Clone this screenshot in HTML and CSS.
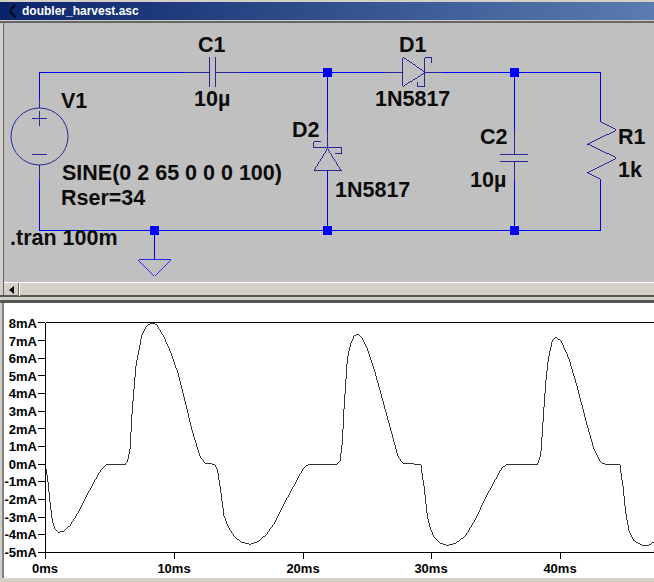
FILE: index.html
```html
<!DOCTYPE html>
<html lang="en">
<head>
  <meta charset="UTF-8">
  <meta name="viewport" content="width=device-width, initial-scale=1.0">
  <title>doubler_harvest.asc</title>
  <link rel="stylesheet" href="styles.css">
</head>
<body>
  <div class="titlebar">
    <svg class="title-icon" width="12" height="18" viewBox="0 0 12 18">
      <path d="M9.5 2.5 L6 6 L4.5 8.5 L4.5 11.5 L6 11.5 L9.5 15.5" fill="none" stroke="#000" stroke-width="1.4"/>
    </svg>
    <span class="title-text">doubler_harvest.asc</span>
  </div>

  <div class="schematic-window">
    <svg class="schematic" width="650" height="259" viewBox="4 23 650 259">
      <!-- wires -->
      <g class="wire">
        <path d="M39.5 100V72.5H183M241 72.5H385M442 72.5H600.5V122"/>
        <path d="M600.5 180V230.5H39.5V180"/>
        <path d="M327.5 72.5V130M327.5 170V230.5"/>
        <path d="M514.5 72.5V130M514.5 180V230.5"/>
        <path d="M154.5 230.5V259.5"/>
      </g>
      <path class="ground" d="M138.5 259.5H170.5L154.5 275.5Z"/>
      <g class="junction">
        <rect x="323" y="68" width="9" height="9"/>
        <rect x="510" y="68" width="9" height="9"/>
        <rect x="150" y="226" width="9" height="9"/>
        <rect x="323" y="226" width="9" height="9"/>
        <rect x="510" y="226" width="9" height="9"/>
      </g>
      <!-- components -->
      <g class="symbol">
        <circle cx="39.5" cy="136.5" r="28.5"/>
        <path d="M39.5 100V108M39.5 165V180M32 118.5H47M39.5 111V126M32 154.5H47"/>
        <path d="M183 72.5H209.5M209.5 57V87M215.5 57V87M215.5 72.5H241"/>
        <path d="M385 72.5H402.5M402.5 57.5V86L424.5 72.5ZM424.5 72.5H442"/>
        <path d="M431.5 62.5V57.5H424.5V86.5H417.5V81.5"/>
        <path d="M327.5 130V147.5M313.5 170.5H341.5L327.5 147.5Z"/>
        <path d="M320.5 141.5H313.5V147.5H341.5V153.5H334.5"/>
        <path d="M514.5 130V154.5M500 154.5H528M500 161.5H528M514.5 161.5V180"/>
        <path d="M600.5 122L616 130L586.5 144L616 158L586.5 172.5L600.5 180"/>
      </g>
      <g class="label">
        <text x="198" y="52">C1</text>
        <text x="194" y="106">10µ</text>
        <text x="61" y="108">V1</text>
        <text x="292" y="137">D2</text>
        <text x="399" y="52">D1</text>
        <text x="375" y="106">1N5817</text>
        <text x="480" y="144">C2</text>
        <text x="618" y="144">R1</text>
        <text x="618" y="177">1k</text>
        <text x="470" y="187">10µ</text>
        <text x="335" y="197">1N5817</text>
        <text x="62" y="180">SINE(0 2 65 0 0 0 100)</text>
        <text x="61" y="205">Rser=34</text>
        <text x="10" y="245">.tran 100m</text>
      </g>
    </svg>
    <div class="hscroll">
      <div class="scroll-btn"><span class="arrow-left"></span></div>
      <div class="scroll-track"></div>
    </div>
  </div>

  <div class="plot-window">
    <svg class="plot" width="650" height="275" viewBox="4 304 650 275">
      <path class="axis" d="M45.5 323.5H654M45.5 323.5V553.5M45.5 553.5H654"/>
      <path class="axis" d="M38 323.5H45M38 341.5H45M38 359.5H45M38 376.5H45M38 394.5H45M38 412.5H45M38 429.5H45M38 447.5H45M38 465.5H45M38 482.5H45M38 500.5H45M38 518.5H45M38 535.5H45M38 553.5H45"/>
      <path class="axis" d="M45.5 553V560M174.5 553V560M303.5 553V560M431.5 553V560M560.5 553V560"/>
      <g class="ylabel">
        <text x="37" y="329">8mA</text>
        <text x="37" y="347">7mA</text>
        <text x="37" y="364">6mA</text>
        <text x="37" y="382">5mA</text>
        <text x="37" y="399">4mA</text>
        <text x="37" y="417">3mA</text>
        <text x="37" y="435">2mA</text>
        <text x="37" y="452">1mA</text>
        <text x="37" y="470">0mA</text>
        <text x="37" y="487">-1mA</text>
        <text x="37" y="505">-2mA</text>
        <text x="37" y="523">-3mA</text>
        <text x="37" y="540">-4mA</text>
        <text x="37" y="558">-5mA</text>
      </g>
      <g class="xlabel">
        <text x="45" y="574">0ms</text>
        <text x="174" y="574">10ms</text>
        <text x="303" y="574">20ms</text>
        <text x="431" y="574">30ms</text>
        <text x="560" y="574">40ms</text>
      </g>
      <polyline class="trace" points="45.5,465.5 47.7,480 50,503 52.3,521.7 55,530 58.3,533.3 63.3,532.3 70,526.7 78.3,513.3 86.7,496.7 96.7,478.3 101.7,470 106.7,465.5 125,465.5 127.7,461.7 130,450 132.3,410 136,366.7 141.7,336.7 146.7,326.7 151.7,324 156.7,325.7 163.3,336.7 170,351.7 178.3,375 185,401.7 191.7,430 196.7,446.7 200,457.3 205,464 215,465.5 217.3,470 220,486.7 224,516.7 228.3,528.3 235,538.3 241.7,543.3 250,545.3 258.3,542.7 266.7,535 275,523.3 286.7,500 296.7,481.7 303.3,469.3 308.3,465.5 336.7,465.5 340,461.7 342.3,443.3 344,410 347.3,360 350.7,345 354.3,336.7 357.7,335.3 361.7,338.3 366.7,348.3 375,373.3 383.3,403.3 393.3,440 398.3,458.3 403.3,464.3 421,465.5 424,486.7 427.3,516.7 430,528.3 434,538.3 440.7,544.3 447.3,546.3 455.7,544.3 465.7,536.7 475.7,520 484,501.7 494,483.3 502.3,468.3 507.3,465.5 537.3,465.5 540.7,456.7 543,423.3 545.7,383.3 548.3,360 552.3,341.7 556.3,338.3 561.3,342.3 569,360 577.3,388.3 587.3,426.7 594,450 600.7,463.3 605.7,465.5 620,465.5 623,486.7 625.7,513.3 629,531.7 634,541.7 642.3,546.3 649,546 654,542.7"/>
    </svg>
  </div>
</body>
</html>
```

FILE: styles.css
```css
* {
  margin: 0;
  padding: 0;
  box-sizing: border-box;
}

body {
  width: 654px;
  height: 582px;
  overflow: hidden;
  background-color: #d4d0c8;
  font-family: "Liberation Sans", Arial, sans-serif;
  padding-top: 2px;
}

svg {
  display: block;
}

.titlebar {
  height: 18px;
  display: flex;
  align-items: center;
  padding-left: 6px;
  background: linear-gradient(to right, #0a246a, #5a7cb0);
}

.title-icon {
  margin-right: 4px;
}

.title-text {
  color: white;
  font-size: 12px;
  font-weight: bold;
}

.schematic-window {
  position: relative;
  margin-top: 1px;
  height: 276px;
  padding-left: 3px;
  border-top: 2px solid #666;
  border-bottom: 2px solid #555;
  background-color: #d4d0c8;
}

.schematic-window::before {
  content: "";
  position: absolute;
  left: 3px;
  top: 0;
  bottom: 0;
  width: 1px;
  background-color: #666;
}

.schematic {
  margin-left: 1px;
  background-color: #c0c0c0;
}

.wire path {
  fill: none;
  stroke: #0000ff;
  stroke-width: 1;
  shape-rendering: crispEdges;
}

.ground {
  fill: none;
  stroke: #0000ff;
  stroke-width: 0.8;
  shape-rendering: crispEdges;
}

.junction rect {
  fill: #0000ff;
}

.symbol {
  fill: none;
  stroke: #000090;
  stroke-width: 0.8;
}

.symbol path {
  shape-rendering: crispEdges;
}

.label text {
  font-family: "Liberation Sans", Arial, sans-serif;
  font-size: 21.5px;
  font-weight: bold;
  fill: #0c0c0c;
}

.hscroll {
  display: flex;
  height: 14px;
  margin-left: 1px;
  border-top: 1px solid white;
}

.scroll-btn {
  width: 15px;
  display: flex;
  align-items: center;
  justify-content: center;
  border-right: 1px solid #666;
}

.arrow-left {
  width: 0;
  height: 0;
  border-top: 4px solid transparent;
  border-bottom: 4px solid transparent;
  border-right: 5px solid black;
}

.scroll-track {
  flex: 1;
  border-left: 1px solid white;
}

.plot-window {
  position: relative;
  margin-top: 3px;
  height: 278px;
  padding-left: 4px;
  border-top: 3px solid #555;
}

.plot-window::before {
  content: "";
  position: absolute;
  left: 2px;
  top: 0;
  height: 275px;
  width: 2px;
  background-color: #808080;
}

.plot {
  background-color: white;
}

.axis {
  fill: none;
  stroke: black;
  stroke-width: 1;
  shape-rendering: crispEdges;
}

.trace {
  fill: none;
  stroke: black;
  stroke-width: 0.8;
  shape-rendering: crispEdges;
}

.ylabel text,
.xlabel text {
  font-family: "Liberation Sans", Arial, sans-serif;
  font-size: 13px;
  font-weight: bold;
  fill: black;
}

.ylabel text {
  text-anchor: end;
}

.xlabel text {
  text-anchor: middle;
}
```
